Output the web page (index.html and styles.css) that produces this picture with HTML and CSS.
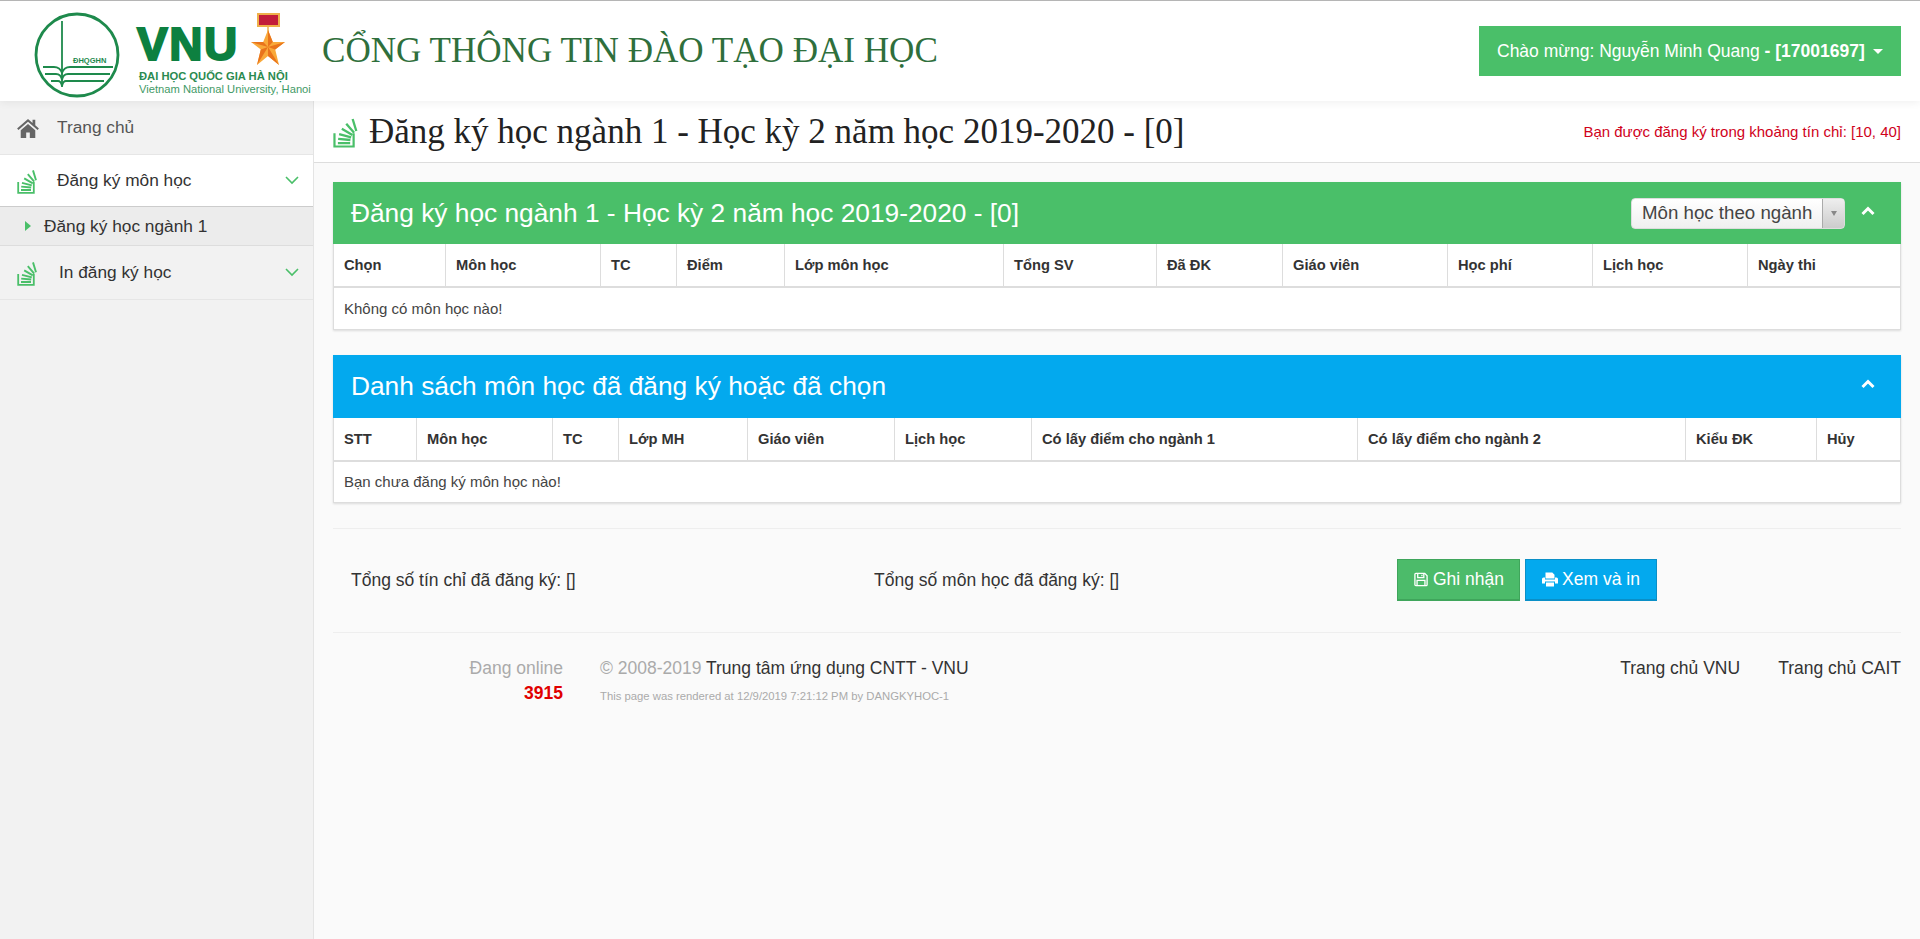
FILE: index.html
```html
<!DOCTYPE html>
<html lang="vi">
<head>
<meta charset="utf-8">
<title>Cổng thông tin đào tạo đại học</title>
<link rel="stylesheet" href="styles.css">
</head>
<body>
<svg class="defs" width="0" height="0" aria-hidden="true">
  <symbol id="stack" viewBox="0 0 22 26">
    <path d="M1.200 14v10.800h15.600V14" fill="none" stroke="currentColor" stroke-width="1.800"/>
    <path d="M4 22h10M4.200 18.600l10 .9M5 14.800l9.800 2.600M7.200 10.400l8.600 5M10.800 6.200l6.400 7.400M16 2.400l3 9.800" fill="none" stroke="currentColor" stroke-width="1.900"/>
  </symbol>
  <symbol id="chev" viewBox="0 0 14 9">
    <path d="M1 1l6 6 6-6" fill="none" stroke="currentColor" stroke-width="1.600"/>
  </symbol>
  <symbol id="up" viewBox="0 0 14 10">
    <path d="M1.500 8L7 2.500 12.500 8" fill="none" stroke="currentColor" stroke-width="3"/>
  </symbol>
</svg>

<header class="topbar">
  <div class="logo">
    <svg class="seal" viewBox="0 0 86 86">
      <circle cx="43" cy="43" r="41" fill="#fff" stroke="#1e8a4c" stroke-width="2.800"/>
      <path d="M28 9v66" stroke="#1e8a4c" stroke-width="1.800" fill="none"/>
      <path d="M9 55h11q6 0 8 6q2-6 8-6h43M11 62h11q5 0 6 6q1-6 6-6h42M17 69h7q3 0 4 5q1-5 4-5h38" stroke="#1e8a4c" stroke-width="1.800" fill="none"/>
      <text class="seal-text" x="39" y="51">ĐHQGHN</text>
    </svg>
    <div class="brand">
      <div class="brand-row">
        <span class="vnu">VNU</span>
        <svg class="medal" viewBox="0 0 34 52">
          <rect x="7" y="1" width="21" height="12" fill="#c21d3a" stroke="#eeb04a" stroke-width="2"/>
          <path d="M17 14v6" stroke="#eeb04a" stroke-width="1.500"/>
          <path d="M17 17l4.800 12H34l-9.800 7.500L28 52 17 43 6 52l3.800-15.500L0 29h12.200z" fill="#f9a93a"/>
          <path d="M17 17l4.800 12L17 34zM34 29l-9.800 7.500L17 34zM28 52L17 43v-9zM6 52l11-18-7.200 2.500zM0 29h12.200L17 34z" fill="#e9741c"/>
        </svg>
      </div>
      <div class="brand-vi">ĐẠI HỌC QUỐC GIA HÀ NỘI</div>
      <div class="brand-en">Vietnam National University, Hanoi</div>
    </div>
  </div>
  <h1 class="portal">CỔNG THÔNG TIN ĐÀO TẠO ĐẠI HỌC</h1>
  <div class="user"><span>Chào mừng: Nguyễn Minh Quang <b>- [17001697]</b></span><i class="caret"></i></div>
</header>

<div class="shell">
  <nav class="side">
    <a class="nav home">
      <svg class="ico" viewBox="0 0 24 22"><path d="M12 1L0 11.500l1.500 1.700L12 4l10.500 9.200 1.500-1.700-4-3.500V2h-3v3.400zM4 13.500V22h6v-6h4v6h6v-8.500L12 6.500z" fill="#666"/></svg>
      <span>Trang chủ</span>
    </a>
    <a class="nav open">
      <svg class="ico green"><use href="#stack"/></svg>
      <span>Đăng ký môn học</span>
      <svg class="chev"><use href="#chev"/></svg>
    </a>
    <a class="sub"><i class="tri"></i>Đăng ký học ngành 1</a>
    <a class="nav">
      <svg class="ico green"><use href="#stack"/></svg>
      <span class="in">In đăng ký học</span>
      <svg class="chev"><use href="#chev"/></svg>
    </a>
  </nav>

  <main class="main">
    <div class="pagehead">
      <h2><svg class="headico"><use href="#stack"/></svg>Đăng ký học ngành 1 - Học kỳ 2 năm học 2019-2020 - [0]</h2>
      <span class="limit">Bạn được đăng ký trong khoảng tín chỉ: [10, 40]</span>
    </div>

    <div class="content">
      <section class="panel">
        <div class="phead greenbg">
          <h3>Đăng ký học ngành 1 - Học kỳ 2 năm học 2019-2020 - [0]</h3>
          <div class="combo"><span>Môn học theo ngành</span><b><i></i></b></div>
          <svg class="up"><use href="#up"/></svg>
        </div>
        <table class="tbl">
          <colgroup><col class="a1"><col class="a2"><col class="a3"><col class="a4"><col class="a5"><col class="a6"><col class="a7"><col class="a8"><col class="a9"><col class="a10"><col></colgroup>
          <thead><tr><th>Chọn</th><th>Môn học</th><th>TC</th><th>Điểm</th><th>Lớp môn học</th><th>Tổng SV</th><th>Đã ĐK</th><th>Giáo viên</th><th>Học phí</th><th>Lịch học</th><th>Ngày thi</th></tr></thead>
          <tbody><tr><td colspan="11">Không có môn học nào!</td></tr></tbody>
        </table>
      </section>

      <section class="panel">
        <div class="phead bluebg">
          <h3>Danh sách môn học đã đăng ký hoặc đã chọn</h3>
          <svg class="up"><use href="#up"/></svg>
        </div>
        <table class="tbl">
          <colgroup><col class="b1"><col class="b2"><col class="b3"><col class="b4"><col class="b5"><col class="b6"><col class="b7"><col class="b8"><col class="b9"><col></colgroup>
          <thead><tr><th>STT</th><th>Môn học</th><th>TC</th><th>Lớp MH</th><th>Giáo viên</th><th>Lịch học</th><th>Có lấy điểm cho ngành 1</th><th>Có lấy điểm cho ngành 2</th><th>Kiểu ĐK</th><th>Hủy</th></tr></thead>
          <tbody><tr><td colspan="10">Bạn chưa đăng ký môn học nào!</td></tr></tbody>
        </table>
      </section>

      <div class="totals">
        <span class="t1">Tổng số tín chỉ đã đăng ký: []</span>
        <span class="t2">Tổng số môn học đã đăng ký: []</span>
        <div class="btns">
          <button class="btn save"><svg viewBox="0 0 16 16"><path d="M2.500 1.500h9.500l2.500 2.500v9.500a1 1 0 0 1-1 1h-11a1 1 0 0 1-1-1v-11a1 1 0 0 1 1-1zM4.500 1.500v4.500h6.500V1.500M3.800 14.500V9h8.400v5.500M9 3v1.600" fill="none" stroke="#fff" stroke-width="1.400"/></svg>Ghi nhận</button>
          <button class="btn print"><svg viewBox="0 0 16 14"><path d="M3.500 0h6.800l2.200 2.200V6h-9zM1.500 5H3v2h10V5h1.500A1.500 1.500 0 0 1 16 6.500V11h-3V9H3v2H0V6.500A1.500 1.500 0 0 1 1.500 5zM4 10h8v4H4z" fill="#fff"/></svg>Xem và in</button>
        </div>
      </div>

      <footer class="foot">
        <div class="online">Đang online<b>3915</b></div>
        <div class="copy">
          <div>© 2008-2019 <a>Trung tâm ứng dụng CNTT - VNU</a></div>
          <small>This page was rendered at 12/9/2019 7:21:12 PM by DANGKYHOC-1</small>
        </div>
        <div class="links"><a>Trang chủ VNU</a><a>Trang chủ CAIT</a></div>
      </footer>
    </div>
  </main>
</div>
</body>
</html>
```
FILE: styles.css
```css
* { box-sizing: border-box; }
html, body { margin: 0; height: 100%; overflow: hidden; }
body { font-family: "Liberation Sans", Arial, sans-serif; font-size: 15px; color: #333; background: #fafafa; display: flex; flex-direction: column; }
.defs { position: absolute; }

.topbar { height: 101px; flex: none; background: #fff; border-top: 1px solid #b5b5b5; display: flex; align-items: center; padding: 0 19px 0 34px; box-shadow: 0 2px 8px rgba(0,0,0,.06); position: relative; z-index: 2; }
.logo { display: flex; width: 288px; flex: none; align-items: flex-start; height: 100%; padding-top: 11px; }
.seal { width: 86px; height: 86px; flex: none; }
.seal-text { font: bold 7.500px "Liberation Sans", sans-serif; fill: #1e8a4c; }
.brand { margin-left: 19px; width: 178px; }
.brand-row { display: flex; align-items: flex-start; height: 52px; }
.vnu { font: bold 46px/46px "Liberation Sans", sans-serif; color: #0d8040; -webkit-text-stroke: 2px #0d8040; margin: 9px 0 0 -2px; letter-spacing: 1.500px; width: 114px; }
.medal { width: 34px; height: 52px; flex: none; margin-top: 1px; }
.brand-vi { font: bold 11.200px/13px "Liberation Sans", sans-serif; color: #2a8a50; white-space: nowrap; margin-top: 6px; }
.brand-en { font: 11.200px/13px "Liberation Sans", sans-serif; color: #3f9a66; white-space: nowrap; }
.portal { font: normal 35.100px/40px "Liberation Serif", "Times New Roman", serif; color: #2f6f3c; margin: 0; flex: 1; white-space: nowrap; }
.user { background: #4abf69; color: #fff; height: 50px; width: 422px; flex: none; display: flex; align-items: center; padding-left: 18px; font-size: 17.500px; white-space: nowrap; }
.caret { border-top: 5px solid #fff; border-left: 5px solid transparent; border-right: 5px solid transparent; margin-left: 8px; }

.shell { flex: 1; display: flex; min-height: 0; }
.side { width: 314px; flex: none; background: #f2f2f2; border-right: 1px solid #e4e4e4; }
.nav { display: flex; align-items: center; height: 54px; border-bottom: 1px solid #e6e6e6; font-size: 17.300px; color: #333; padding-left: 17px; }
.nav.home { color: #555; }
.nav.open { background: #fff; height: 52px; border-bottom: 1px solid #ccc; }
.ico { width: 22px; height: 26px; flex: none; margin-right: 18px; }
.home .ico { height: 20px; }
.in { margin-left: 2px; }
.green { color: #4abf69; }
.chev { width: 14px; height: 9px; color: #4abf69; margin-left: auto; margin-right: 14px; }
.sub { display: flex; align-items: center; height: 39px; background: #ececec; border-bottom: 1px solid #ddd; font-size: 17.300px; color: #333; padding-left: 25px; }
.tri { border-left: 6px solid #4abf69; border-top: 5px solid transparent; border-bottom: 5px solid transparent; margin-right: 13px; }

.main { flex: 1; min-width: 0; display: flex; flex-direction: column; }
.pagehead { height: 62px; flex: none; background: #fff; border-bottom: 1px solid #ddd; display: flex; align-items: center; justify-content: space-between; padding: 0 19px; }
.pagehead h2 { font: normal 35px/40px "Liberation Serif", "Times New Roman", serif; color: #222; margin: 0; display: flex; align-items: center; white-space: nowrap; }
.headico { width: 27px; height: 36px; color: #4abf69; margin-right: 9px; }
.limit { color: #d0021b; font-size: 15px; }

.content { padding: 19px 19px 0; }
.panel { margin-bottom: 25px; background: #fff; box-shadow: 0 1px 2px rgba(0,0,0,.12); }
.phead { height: 62px; display: flex; align-items: center; color: #fff; padding: 0 26px 0 18px; }
.bluebg { background: #03a9ee; height: 63px; }
.greenbg { background: #4abf69; }
.phead h3 { font: normal 26.300px/32px "Liberation Sans", sans-serif; margin: 0; flex: 1; white-space: nowrap; }
.up { width: 14px; height: 10px; color: #fff; margin-top: -4px; }
.combo { width: 214px; height: 31px; background: linear-gradient(#fff, #f0f0f0); border: 1px solid #ddd; border-radius: 4px; color: #444; display: flex; align-items: center; font-size: 18.700px; margin-right: 16px; overflow: hidden; }
.combo span { flex: 1; padding-left: 10px; white-space: nowrap; }
.combo b { width: 22px; height: 100%; background: linear-gradient(#eee, #ccc); border-left: 1px solid #aaa; display: flex; align-items: center; justify-content: center; }
.combo i { border-top: 5px solid #888; border-left: 3px solid transparent; border-right: 3px solid transparent; }

.tbl { width: 100%; border-collapse: collapse; table-layout: fixed; background: #fff; }
.tbl th { height: 43px; text-align: left; font-size: 14.700px; font-weight: bold; color: #333; padding: 0 10px; border-left: 1px solid #ddd; border-right: 1px solid #ddd; border-bottom: 2px solid #ddd; }
.tbl td { height: 42px; padding: 0 10px; font-size: 15px; color: #444; border: 1px solid #ddd; }
.a1 { width: 112px; } .a2 { width: 155px; } .a3 { width: 76px; } .a4 { width: 108px; } .a5 { width: 219px; }
.a6 { width: 153px; } .a7 { width: 126px; } .a8 { width: 165px; } .a9 { width: 145px; } .a10 { width: 155px; }
.b1 { width: 83px; } .b2 { width: 136px; } .b3 { width: 66px; } .b4 { width: 129px; } .b5 { width: 147px; }
.b6 { width: 137px; } .b7 { width: 326px; } .b8 { width: 328px; } .b9 { width: 131px; }

.totals { border-top: 1px solid #eee; border-bottom: 1px solid #eee; height: 105px; display: flex; align-items: center; font-size: 17.500px; color: #333; }
.t1 { margin-left: 18px; width: 523px; }
.t2 { width: 523px; }
.btns { display: flex; gap: 5px; margin-top: -1px; }
.btn { height: 42px; border: 1px solid; border-bottom-width: 2px; color: #fff; font: 17.500px "Liberation Sans", sans-serif; padding: 0; display: flex; align-items: center; justify-content: center; gap: 4px; }
.btn svg { width: 16px; height: 15px; }
.save { width: 123px; background: #4cbb6a; border-color: #3fa55b; }
.print { width: 132px; background: #03a9ee; border-color: #0a8fc7; }

.foot { display: flex; padding-top: 23px; font-size: 17.500px; color: #aaa; }
.online { width: 230px; text-align: right; line-height: 24px; }
.online b { display: block; color: #e00000; margin-top: 1px; }
.copy { margin-left: 37px; flex: 1; line-height: 24px; }
.copy a { color: #333; }
.copy small { display: block; font-size: 11.300px; line-height: 14px; margin-top: 9px; color: #aaa; }
.links { display: flex; gap: 38px; color: #333; line-height: 24px; }
```
